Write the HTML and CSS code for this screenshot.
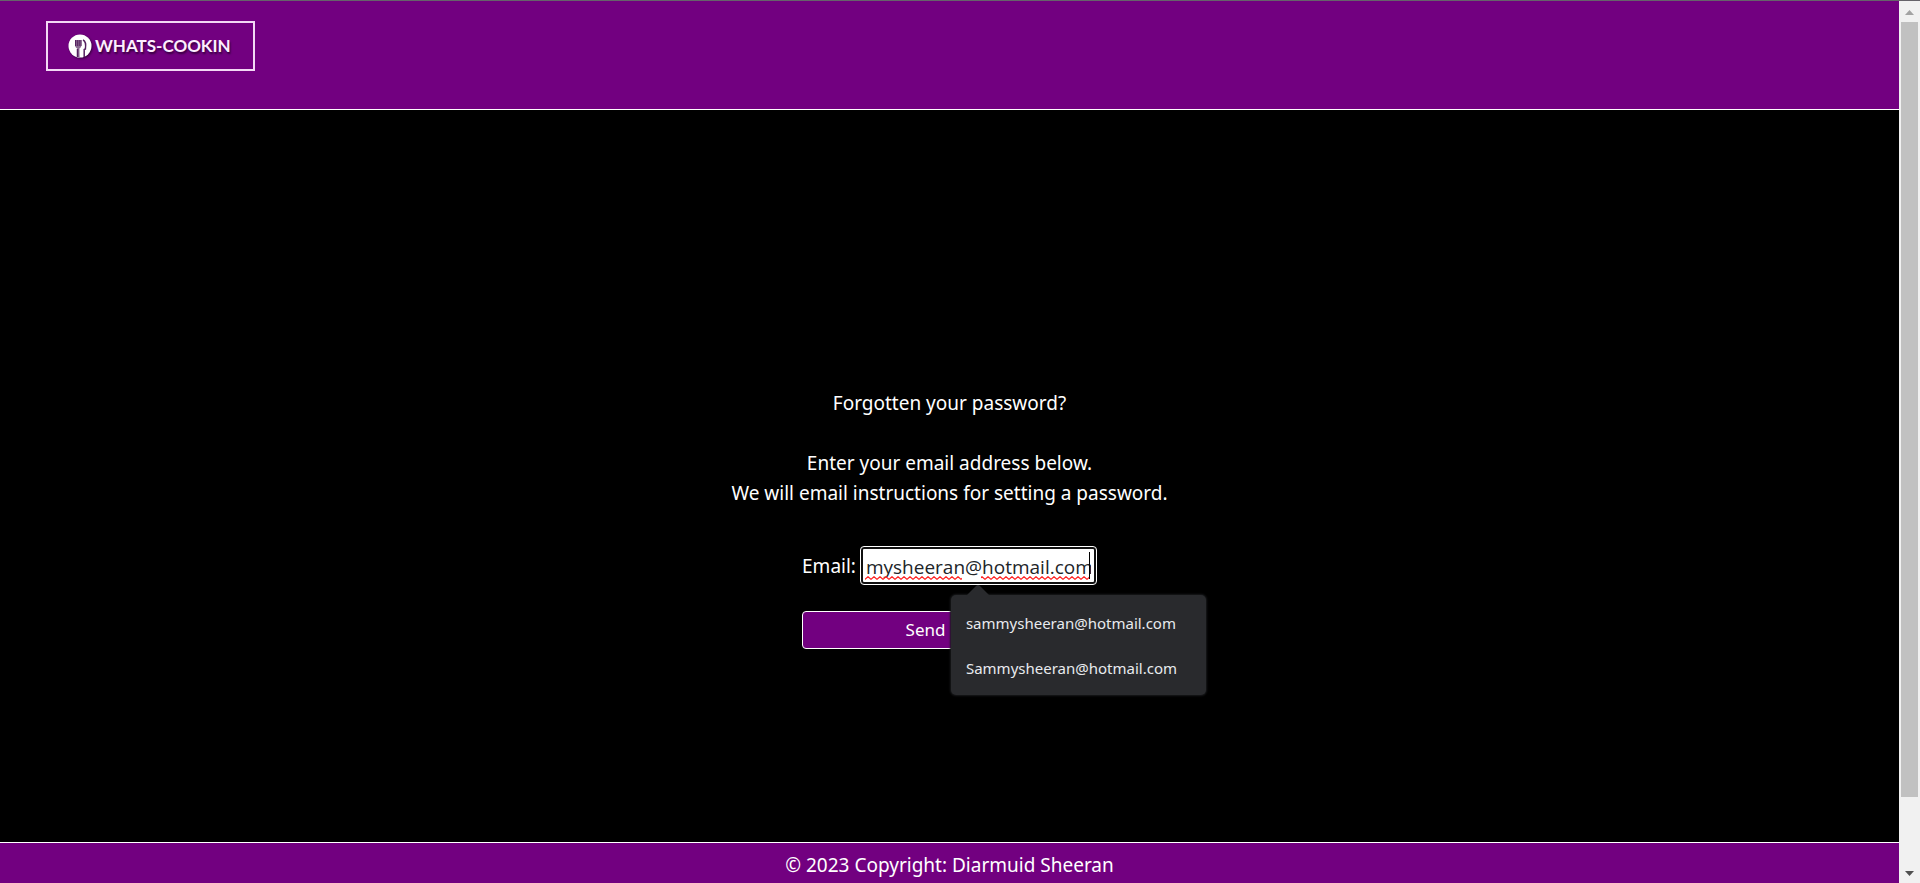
FILE: index.html
```html
<!DOCTYPE html>
<html lang="en">
<head>
<meta charset="utf-8">
<meta name="viewport" content="width=device-width, initial-scale=1">
<title>Whats-Cookin</title>
<link rel="stylesheet" href="styles.css">
</head>
<body>
<div class="page">
  <header class="header">
    <a class="logo" href="#">
      <svg class="logo-icon" viewBox="0 0 24 25" aria-hidden="true">
        <circle cx="12" cy="12" r="11.5" fill="#fff"/>
        <path d="M7 6v5c0 2 1.200 3 2.200 3.400L9 23h2.600l-.2-8.600c1-.4 2-1.400 2-3.400V6" fill="#8a6a92"/>
        <path d="M7.500 6v6M9.300 6v6M11.200 6v6M13 6v6" stroke="#54205f" fill="none"/>
        <path d="M9.500 15v8" stroke="#54205f" stroke-width="1.500" fill="none"/>
        <path d="M15 6c2.400 1 3 5 2.400 9l-1.200.5V23" stroke="#54205f" stroke-width="1.500" fill="none"/>
      </svg>
      <span>WHATS-COOKIN</span>
    </a>
  </header>
  <main class="main">
    <p class="copy">Forgotten your password?</p>
    <p class="copy">Enter your email address below.<br>We will email instructions for setting a password.</p>
    <form class="form">
      <div class="row">
        <label for="email">Email:</label>
        <div class="field">
          <input class="email" id="email" type="text" value="mysheeran@hotmail.com">
          <svg class="squiggle" aria-hidden="true">
            <defs><pattern id="wave" width="6" height="4" patternUnits="userSpaceOnUse"><path d="M-1 2.500L0 3.300L3 .7L6 3.300L7 2.500" fill="none" stroke="#f22" stroke-width="1.200"/></pattern></defs>
            <rect width="97" height="4" fill="url(#wave)"/>
            <rect x="116" width="109" height="4" fill="url(#wave)"/>
          </svg>
          <span class="caret"></span>
          <div class="popup">
            <svg class="pointer" viewBox="0 0 24 12" aria-hidden="true"><path d="M0 12L10 2Q12 0 14 2L24 12Z" fill="#292a2d"/></svg>
            <ul class="options">
              <li>sammysheeran@hotmail.com</li>
              <li>Sammysheeran@hotmail.com</li>
            </ul>
          </div>
        </div>
      </div>
      <button class="send" type="button">Send</button>
    </form>
  </main>
  <footer class="footer">© 2023 Copyright: Diarmuid Sheeran</footer>
</div>
<div class="scrollbar" aria-hidden="true">
  <svg class="arrow" viewBox="0 0 9 5"><path d="M0 5L4.500 0L9 5Z" fill="#a3a3a3"/></svg>
  <div class="track"><div class="thumb"></div></div>
  <svg class="arrow" viewBox="0 0 9 5"><path d="M0 0L4.500 5L9 0Z" fill="#505050"/></svg>
</div>
</body>
</html>
```
FILE: styles.css
```css
* { box-sizing: border-box; }

body {
  margin: 0;
  height: 100vh;
  display: grid;
  grid-template-columns: 1fr 21px;
  border-top: 1px solid #66636a;
  background: #000;
  color: #fff;
  font: 19px/30px "Noto Sans", "Open Sans", sans-serif;
}

.page {
  display: flex;
  flex-direction: column;
}

.header {
  padding: 20px 46px 38px;
  background: #720080;
  border-bottom: 1px solid #fff;
}

.logo {
  display: inline-flex;
  align-items: center;
  gap: 3px;
  height: 50px;
  padding: 0 22px 0 20px;
  border: 2px solid #f3d9f5;
  color: #fdeeff;
  font: 700 17px/24px Lato, sans-serif;
  text-decoration: none;
  text-shadow: 1px 2px 2px #35003c;
  vertical-align: top;
}

.logo-icon {
  width: 24px;
  height: 25px;
  filter: drop-shadow(1px 1px 1px #35003c);
}

.main {
  flex: 1;
  display: flex;
  flex-direction: column;
  align-items: center;
  justify-content: center;
  padding-top: 85px;
  text-align: center;
}

.copy { margin: 0 0 30px; }

.form {
  display: flex;
  flex-direction: column;
  gap: 26px;
  padding-top: 8px;
}

.row {
  display: flex;
  align-items: center;
  justify-content: space-between;
  gap: 4px;
}

.field { position: relative; }

.email {
  display: block;
  width: 237px;
  height: 39px;
  padding: 2px 3px 0;
  border: 3px solid #101010;
  outline: 1px solid #fff;
  outline-offset: -1px;
  border-radius: 4px;
  background: #fff;
  color: #212529;
  font: 19px/30px "Open Sans", sans-serif;
}

.squiggle {
  position: absolute;
  left: 5px;
  top: 30px;
  width: 226px;
  height: 4px;
}

.caret {
  position: absolute;
  right: 7px;
  top: 6px;
  width: 1px;
  height: 27px;
  background: #000;
}

.popup {
  position: absolute;
  left: 91px;
  top: 49px;
  padding: 6px 22px 4px 15px;
  width: 255px;
  border-radius: 5px;
  background: #292a2d;
  box-shadow: 0 0 2px 1px #18191b;
  color: #e8eaed;
  font: 15px/45px "Noto Sans", "Open Sans", sans-serif;
  text-align: left;
}

.pointer {
  position: absolute;
  left: 15px;
  top: -11px;
  width: 24px;
  height: 12px;
}

.options {
  margin: 0;
  padding: 0;
  list-style: none;
}

.send {
  height: 38px;
  padding: 0 48px 0 0;
  border: 1px solid #fff;
  border-radius: 4px;
  background: #720080;
  color: #fff;
  font: 17px/30px "Noto Sans", "Open Sans", sans-serif;
}

.footer {
  padding: 7px 0 3px;
  background: #720080;
  border-top: 1px solid #fff;
  text-align: center;
}

.scrollbar {
  display: flex;
  flex-direction: column;
  align-items: center;
  padding: 9px 2px 7px;
  background: #f1f1f1;
}

.arrow {
  width: 9px;
  height: 5px;
}

.track {
  flex: 1;
  width: 17px;
  padding: 7px 0;
}

.thumb {
  height: 92%;
  background: #c1c1c1;
}
```
